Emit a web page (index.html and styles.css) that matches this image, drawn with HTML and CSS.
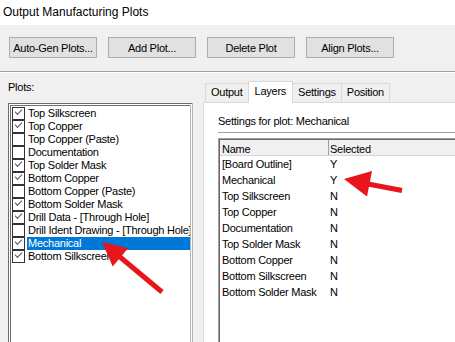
FILE: index.html
```html
<!DOCTYPE html>
<html lang="en">
<head>
    <meta charset="UTF-8">
    <title>Output Manufacturing Plots</title>
    <link rel="stylesheet" href="styles.css">
</head>
<body>
<div class="window">
    <div class="titlebar">Output Manufacturing Plots</div>
    <div class="toolbar">
        <button class="btn">Auto-Gen Plots...</button>
        <button class="btn">Add Plot...</button>
        <button class="btn">Delete Plot</button>
        <button class="btn">Align Plots...</button>
    </div>
    <div class="main-sep"></div>
    <div class="main">
        <div class="plots">
            <div class="plots-label">Plots:</div>
            <ul class="plot-list">
                <li><span class="chk on"></span><span class="item">Top Silkscreen</span></li>
                <li><span class="chk on"></span><span class="item">Top Copper</span></li>
                <li><span class="chk"></span><span class="item">Top Copper (Paste)</span></li>
                <li><span class="chk"></span><span class="item">Documentation</span></li>
                <li><span class="chk on"></span><span class="item">Top Solder Mask</span></li>
                <li><span class="chk on"></span><span class="item">Bottom Copper</span></li>
                <li><span class="chk"></span><span class="item">Bottom Copper (Paste)</span></li>
                <li><span class="chk on"></span><span class="item">Bottom Solder Mask</span></li>
                <li><span class="chk on"></span><span class="item">Drill Data - [Through Hole]</span></li>
                <li><span class="chk"></span><span class="item">Drill Ident Drawing - [Through Hole]</span></li>
                <li><span class="chk on"></span><span class="item sel">Mechanical</span></li>
                <li><span class="chk on"></span><span class="item">Bottom Silkscreen</span></li>
            </ul>
        </div>
        <div class="tabs-area">
            <div class="tabstrip">
                <div class="tab">Output</div>
                <div class="tab active">Layers</div>
                <div class="tab">Settings</div>
                <div class="tab">Position</div>
            </div>
            <div class="panel">
                <div class="caption">Settings for plot: Mechanical</div>
                <div class="caption-sep"></div>
                <div class="layers">
                    <div class="layers-inner">
                        <div class="hdr"><span class="c1">Name</span><span class="c2">Selected</span></div>
                        <div class="row"><span class="c1">[Board Outline]</span><span class="c2">Y</span></div>
                        <div class="row"><span class="c1">Mechanical</span><span class="c2">Y</span></div>
                        <div class="row"><span class="c1">Top Silkscreen</span><span class="c2">N</span></div>
                        <div class="row"><span class="c1">Top Copper</span><span class="c2">N</span></div>
                        <div class="row"><span class="c1">Documentation</span><span class="c2">N</span></div>
                        <div class="row"><span class="c1">Top Solder Mask</span><span class="c2">N</span></div>
                        <div class="row"><span class="c1">Bottom Copper</span><span class="c2">N</span></div>
                        <div class="row"><span class="c1">Bottom Silkscreen</span><span class="c2">N</span></div>
                        <div class="row"><span class="c1">Bottom Solder Mask</span><span class="c2">N</span></div>
                    </div>
                </div>
            </div>
        </div>
    </div>
    <svg class="arrows" width="455" height="342" viewBox="0 0 455 342">
        <line x1="120" y1="257" x2="162" y2="292" stroke="#e8151b" stroke-width="5"/>
        <polygon points="102,242 112.7,266.6 128.1,248.2" fill="#e8151b"/>
        <line x1="368" y1="184" x2="402" y2="190.5" stroke="#e8151b" stroke-width="5"/>
        <polygon points="344,179 367,196.6 372,171" fill="#e8151b"/>
    </svg>
</div>
</body>
</html>
```

FILE: styles.css
```css
body{
    margin: 0;
    width: 455px;
    height: 342px;
    overflow: hidden;
    background: #f0f0f0;
    font-family: "Liberation Sans", Arial, sans-serif;
    font-size: 11px;
    letter-spacing: -0.25px;
    color: #000;
}
.window{
    position: relative;
    width: 455px;
    height: 342px;
    overflow: hidden;
}
.titlebar{
    height: 25px;
    line-height: 24px;
    background: #fff;
    padding-left: 3px;
    font-size: 12px;
    letter-spacing: 0;
}
.toolbar{
    display: flex;
    gap: 11px;
    height: 21px;
    padding: 12px 0 0 9px;
    margin-bottom: 13px;
}
.btn{
    width: 88px;
    height: 21px;
    padding: 0;
    box-sizing: border-box;
    border: 1px solid #adadad;
    background: #e1e1e1;
    font: inherit;
    letter-spacing: inherit;
    color: #000;
}
.main-sep{
    border-top: 1px solid #a0a0a0;
    border-bottom: 1px solid #fff;
}
.main{
    display: flex;
    gap: 10px;
    padding-left: 8px;
}
.plots{
    width: 185px;
    flex: none;
    padding-top: 8px;
}
.plots-label{
    height: 13px;
    line-height: 13px;
    margin-bottom: 9px;
}
.plot-list{
    list-style: none;
    margin: 0;
    padding: 1px 0 0 1px;
    width: 185px;
    height: 239px;
    box-sizing: border-box;
    border: 3px double;
    border-bottom: none;
    border-color: #6d6d6d #b4b4b4 #b4b4b4 #6d6d6d;
    background: #fff;
}
.plot-list li{
    display: flex;
    height: 13px;
    line-height: 13px;
}
.chk{
    position: relative;
    flex: none;
    width: 13px;
    height: 13px;
    box-sizing: border-box;
    border: 1px solid #333;
    background: #fff;
}
.chk.on::after{
    content: "";
    position: absolute;
    left: 2px;
    top: 1px;
    width: 6px;
    height: 3px;
    border-left: 1px solid #555;
    border-bottom: 1px solid #555;
    transform: rotate(-45deg);
}
.item{
    flex: 1;
    margin-left: 2px;
    padding-left: 1px;
    white-space: nowrap;
    overflow: hidden;
}
.item.sel{
    background: #0078d7;
    color: #fff;
}
.tabs-area{
    flex: 1;
    min-width: 0;
    padding-top: 8px;
}
.tabstrip{
    position: relative;
    z-index: 1;
    display: flex;
    align-items: flex-end;
    height: 21px;
    padding-left: 3px;
}
.tab{
    height: 19px;
    line-height: 17px;
    padding: 0 5px;
    margin-left: -1px;
    box-sizing: border-box;
    border: 1px solid #d9d9d9;
    border-bottom: none;
    background: #f0f0f0;
}
.tab.active{
    height: 22px;
    line-height: 18px;
    margin-bottom: -1px;
    padding: 0 6px;
    background: #fff;
}
.panel{
    height: 227px;
    padding: 12px 0 0 14px;
    border: 1px solid #d9d9d9;
    border-right: none;
    border-bottom: none;
    background: #fff;
}
.caption{
    height: 13px;
    line-height: 13px;
}
.caption-sep{
    margin-top: 4px;
    border-top: 1px solid #a0a0a0;
}
.layers{
    margin-top: 5px;
    height: 204px;
    box-sizing: border-box;
    border: 1px solid #a0a0a0;
    border-right: none;
    border-bottom: none;
}
.layers-inner{
    height: 100%;
    box-sizing: border-box;
    border-top: 1px solid #696969;
    border-left: 1px solid #696969;
}
.hdr{
    display: flex;
    height: 16px;
    line-height: 18px;
    box-sizing: border-box;
    background: #f0f0f0;
    border-bottom: 1px solid #d5d5d5;
}
.row{
    display: flex;
    height: 16px;
    line-height: 16px;
}
.c1{
    width: 109px;
    padding-left: 2px;
    box-sizing: border-box;
    white-space: nowrap;
}
.hdr .c1{
    border-right: 1px solid #a0a0a0;
}
.c2{
    padding-left: 1px;
}
.arrows{
    position: absolute;
    left: 0;
    top: 0;
    pointer-events: none;
}
```
